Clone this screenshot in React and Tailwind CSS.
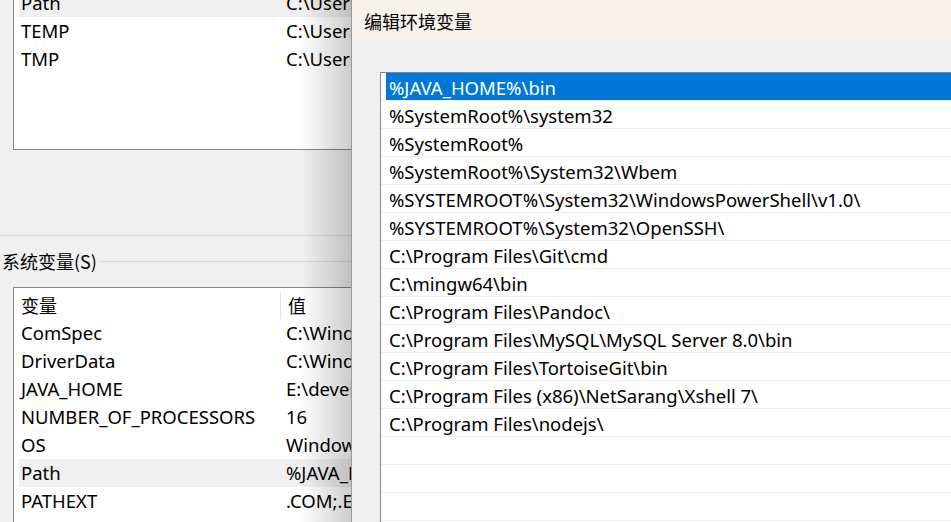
import React from "react";

const userVars = [
  ["Path", "C:\\Users\\admin\\AppData\\Local\\Microsoft\\WindowsApps", true],
  ["TEMP", "C:\\Users\\admin\\AppData\\Local\\Temp"],
  ["TMP", "C:\\Users\\admin\\AppData\\Local\\Temp"],
];

const sysVars = [
  ["ComSpec", "C:\\Windows\\system32\\cmd.exe"],
  ["DriverData", "C:\\Windows\\System32\\Drivers\\DriverData"],
  ["JAVA_HOME", "E:\\develop\\jdk"],
  ["NUMBER_OF_PROCESSORS", "16"],
  ["OS", "Windows_NT"],
  ["Path", "%JAVA_HOME%\\bin;%SystemRoot%\\system32", true],
  ["PATHEXT", ".COM;.EXE;.BAT;.CMD;.VBS"],
];

const paths = [
  "%JAVA_HOME%\\bin",
  "%SystemRoot%\\system32",
  "%SystemRoot%",
  "%SystemRoot%\\System32\\Wbem",
  "%SYSTEMROOT%\\System32\\WindowsPowerShell\\v1.0\\",
  "%SYSTEMROOT%\\System32\\OpenSSH\\",
  "C:\\Program Files\\Git\\cmd",
  "C:\\mingw64\\bin",
  "C:\\Program Files\\Pandoc\\",
  "C:\\Program Files\\MySQL\\MySQL Server 8.0\\bin",
  "C:\\Program Files\\TortoiseGit\\bin",
  "C:\\Program Files (x86)\\NetSarang\\Xshell 7\\",
  "C:\\Program Files\\nodejs\\",
  "", "", "", "",
];

function VarRow({ name, value, hot }) {
  return (
    <div className={`flex h-[28px] items-center whitespace-nowrap ${hot ? "bg-[#f0f0f0]" : ""}`}>
      <span className="w-[267px] shrink-0 pl-[2px]">{name}</span>
      <span>{value}</span>
    </div>
  );
}

export default function App() {
  return (
    <div className="relative w-[951px] h-[522px] overflow-hidden bg-[#f0f0f0] text-[18.5px] leading-[26px] text-black font-['Noto_Sans','Noto_Sans_CJK_SC',sans-serif]">
      {/* background window: environment variables */}
      <div className="flex flex-col">
        <div className="ml-[13px] mt-[-12px] h-[162px] border border-[#828790] bg-white pl-[5px] overflow-hidden">
          {userVars.map(([n, v, hot]) => <VarRow key={n} name={n} value={v} hot={hot} />)}
        </div>
        <div className="h-[85px]" />
        <div className="h-px bg-[#dadada]" />
        <div className="flex items-center h-[26px] mt-[12px]">
          <span className="pl-[2px] pr-[2px] text-[18px] font-['Noto_Sans_CJK_SC',sans-serif]">系统变量(S)</span>
          <div className="flex-1 h-px bg-[#dadada]" />
        </div>
        <div className="ml-[13px] mt-[13px] h-[260px] border border-[#828790] bg-white pl-[5px] overflow-hidden">
          <div className="flex h-[31px] items-center whitespace-nowrap text-[18px] font-['Noto_Sans_CJK_SC',sans-serif]">
            <span className="w-[261px] shrink-0 pl-[2px] pt-[3px]">变量</span>
            <span className="w-px h-[28px] mt-[3px] bg-[#e5e5e5]" />
            <span className="pl-[7px] pt-[3px]">值</span>
          </div>
          {sysVars.map(([n, v, hot]) => <VarRow key={n} name={n} value={v} hot={hot} />)}
        </div>
      </div>

      {/* shadow cast by the dialog */}
      <div className="absolute top-0 bottom-0 left-[301px] w-[50px] bg-gradient-to-r from-transparent to-black/20" />

      {/* dialog: edit environment variable */}
      <div className="absolute top-0 bottom-0 left-[351px] right-0 flex flex-col border-l border-[#9a9a9a] bg-[#f0f0f0]">
        <div className="h-[41px] shrink-0 flex items-center pl-[12px] bg-[#f9f1ec] text-[18px] font-['Noto_Sans_CJK_SC',sans-serif]">
          编辑环境变量
        </div>
        <div className="ml-[28px] mt-[31px] flex-1 border-t border-l border-[#828790] bg-white">
          {paths.map((p, i) => (
            <div key={i} className="h-[28px] border-b border-[#f0f0f0] pl-[5px]">
              <div className={`h-full flex items-center px-[3px] pt-[2px] whitespace-nowrap ${i === 0 ? "bg-[#0078d7] text-white" : ""}`}>
                {p}
              </div>
            </div>
          ))}
        </div>
      </div>
    </div>
  );
}
